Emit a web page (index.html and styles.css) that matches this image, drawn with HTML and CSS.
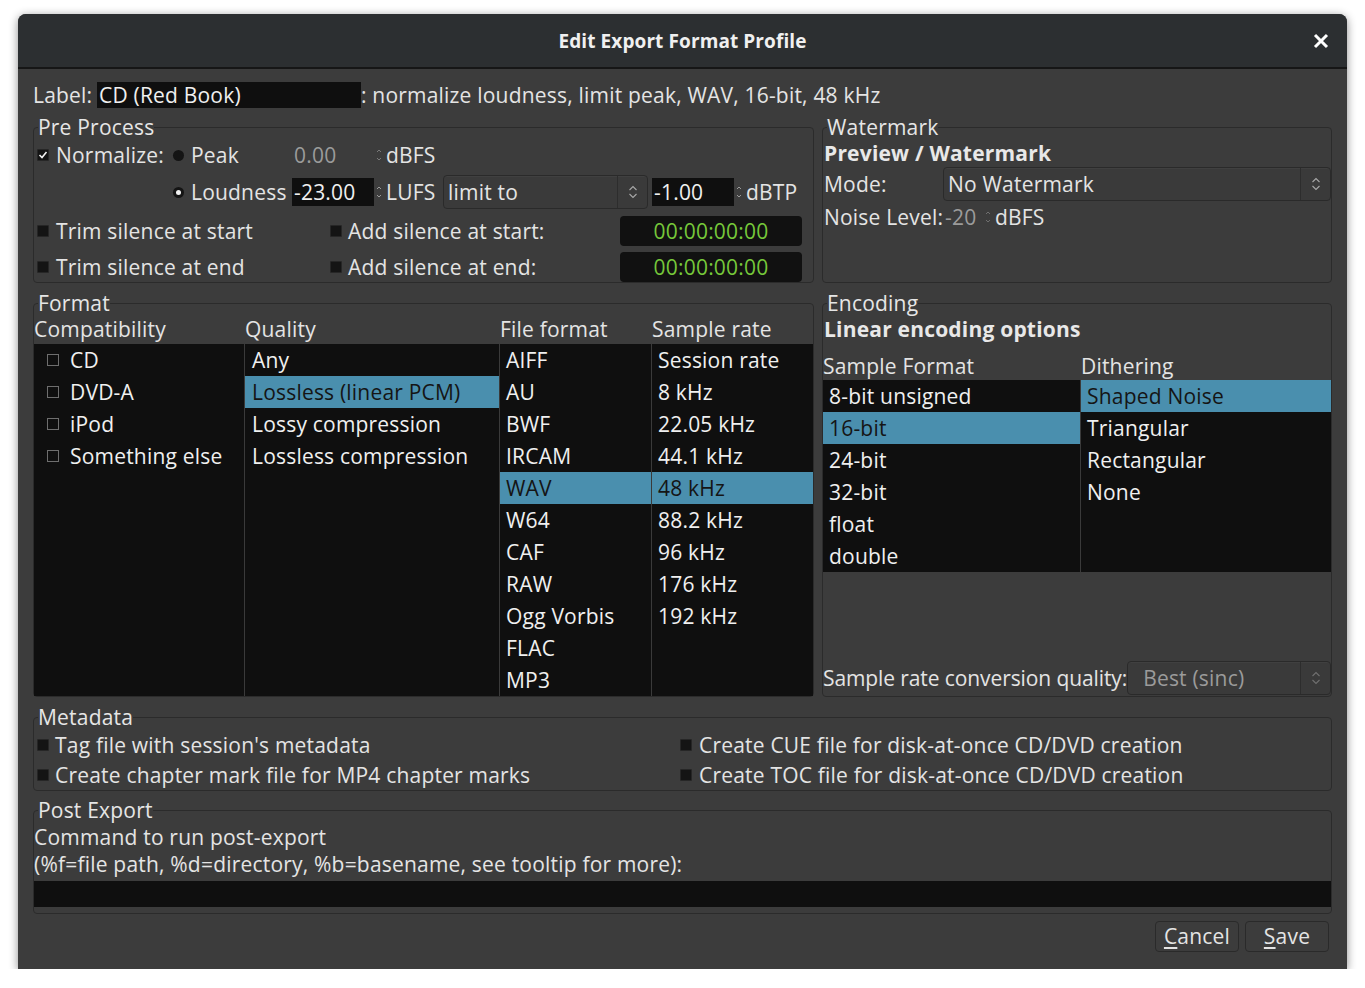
FILE: index.html
```html
<!DOCTYPE html>
<html>
<head>
<meta charset="utf-8">
<title>Edit Export Format Profile</title>
<link rel="stylesheet" href="styles.css">
</head>
<body>
<div class="window">
  <header class="titlebar">
    <span></span>
    <span class="title">Edit Export Format Profile</span>
    <svg class="close" width="16" height="16" viewBox="0 0 16 16"><path d="M2 2 L14 14 M14 2 L2 14" stroke="#ffffff" stroke-width="3" stroke-linecap="butt"/></svg>
  </header>
  <main class="content">
    <div class="label-row">
      <span class="label-txt">Label:</span>
      <span class="entry label-entry">CD (Red Book)</span>
      <span>: normalize loudness, limit peak, WAV, 16-bit, 48 kHz</span>
    </div>

    <div class="frame-row top-row">
      <fieldset class="frame preprocess">
        <legend>Pre Process</legend>
        <div class="pp-row r1">
          <div class="cell c-norm"><span class="check checked"><svg width="10" height="10" viewBox="0 0 10 10"><path d="M1.5 5 L4 7.5 L8.5 2" fill="none" stroke="#f2f2f2" stroke-width="1.6"/></svg></span><span>Normalize:</span></div>
          <div class="cell c-radio"><span class="radio"></span><span>Peak</span></div>
          <span class="spin dim">0.00</span>
          <span class="arrows"><svg width="6" height="16" viewBox="0 0 6 16"><path d="M1 5 L3 3 L5 5 M1 11 L3 13 L5 11" fill="none" stroke="#7a7a7a" stroke-width="1"/></svg></span>
          <span class="unit">dBFS</span>
        </div>
        <div class="pp-row r2">
          <div class="cell c-norm"></div>
          <div class="cell c-radio"><span class="radio on"></span><span>Loudness</span></div>
          <span class="spin entry">-23.00</span>
          <span class="arrows"><svg width="6" height="16" viewBox="0 0 6 16"><path d="M1 5 L3 3 L5 5 M1 11 L3 13 L5 11" fill="none" stroke="#9a9a9a" stroke-width="1"/></svg></span>
          <span class="unit lufs">LUFS</span>
          <div class="combo limit"><span class="combo-txt">limit to</span><span class="combo-btn"><svg width="10" height="16" viewBox="0 0 10 16"><path d="M1.5 6 L5 2.5 L8.5 6 M1.5 10 L5 13.5 L8.5 10" fill="none" stroke="#a8a8a8" stroke-width="1.1"/></svg></span></div>
          <span class="spin entry dbtp">-1.00</span>
          <span class="arrows"><svg width="6" height="16" viewBox="0 0 6 16"><path d="M1 5 L3 3 L5 5 M1 11 L3 13 L5 11" fill="none" stroke="#9a9a9a" stroke-width="1"/></svg></span>
          <span class="unit">dBTP</span>
        </div>
        <div class="pp-row r3">
          <div class="cell c-trim"><span class="check"></span><span>Trim silence at start</span></div>
          <div class="cell c-add"><span class="check"></span><span>Add silence at start:</span></div>
          <span class="clock">00:00:00:00</span>
        </div>
        <div class="pp-row r4">
          <div class="cell c-trim"><span class="check"></span><span>Trim silence at end</span></div>
          <div class="cell c-add"><span class="check"></span><span>Add silence at end:</span></div>
          <span class="clock">00:00:00:00</span>
        </div>
      </fieldset>

      <fieldset class="frame watermark">
        <legend>Watermark</legend>
        <div class="bold-line">Preview / Watermark</div>
        <div class="wm-row mode">
          <span class="wm-label">Mode:</span>
          <div class="combo wide"><span class="combo-txt">No Watermark</span><span class="combo-btn"><svg width="10" height="16" viewBox="0 0 10 16"><path d="M1.5 6 L5 2.5 L8.5 6 M1.5 10 L5 13.5 L8.5 10" fill="none" stroke="#a8a8a8" stroke-width="1.1"/></svg></span></div>
        </div>
        <div class="wm-row noise">
          <span class="wm-label">Noise Level:</span>
          <span class="spin dim small">-20</span>
          <span class="arrows"><svg width="6" height="16" viewBox="0 0 6 16"><path d="M1 5 L3 3 L5 5 M1 11 L3 13 L5 11" fill="none" stroke="#6f6f6f" stroke-width="1"/></svg></span>
          <span class="unit">dBFS</span>
        </div>
      </fieldset>
    </div>

    <div class="frame-row mid-row">
      <fieldset class="frame format">
        <legend>Format</legend>
        <div class="fmt-grid heads">
          <span>Compatibility</span><span>Quality</span><span>File format</span><span>Sample rate</span>
        </div>
        <div class="fmt-grid lists">
          <ul class="list compat">
            <li><span class="box"></span>CD</li>
            <li><span class="box"></span>DVD-A</li>
            <li><span class="box"></span>iPod</li>
            <li><span class="box"></span>Something else</li>
          </ul>
          <ul class="list quality">
            <li>Any</li>
            <li class="sel">Lossless (linear PCM)</li>
            <li>Lossy compression</li>
            <li>Lossless compression</li>
          </ul>
          <ul class="list ff">
            <li>AIFF</li><li>AU</li><li>BWF</li><li>IRCAM</li><li class="sel">WAV</li><li>W64</li><li>CAF</li><li>RAW</li><li>Ogg Vorbis</li><li>FLAC</li><li>MP3</li>
          </ul>
          <ul class="list ff">
            <li>Session rate</li><li>8 kHz</li><li>22.05 kHz</li><li>44.1 kHz</li><li class="sel">48 kHz</li><li>88.2 kHz</li><li>96 kHz</li><li>176 kHz</li><li>192 kHz</li>
          </ul>
        </div>
      </fieldset>

      <fieldset class="frame encoding">
        <legend>Encoding</legend>
        <div class="bold-line enc-bold">Linear encoding options</div>
        <div class="enc-grid heads enc-heads">
          <span>Sample Format</span><span>Dithering</span>
        </div>
        <div class="enc-grid lists">
          <ul class="list ff">
            <li>8-bit unsigned</li><li class="sel">16-bit</li><li>24-bit</li><li>32-bit</li><li>float</li><li>double</li>
          </ul>
          <ul class="list ff">
            <li class="sel">Shaped Noise</li><li>Triangular</li><li>Rectangular</li><li>None</li>
          </ul>
        </div>
        <div class="src-row">
          <span class="src-label">Sample rate conversion quality:</span>
          <div class="combo src"><span class="combo-txt dimtxt">Best (sinc)</span><span class="combo-btn"><svg width="10" height="16" viewBox="0 0 10 16"><path d="M1.5 6 L5 2.5 L8.5 6 M1.5 10 L5 13.5 L8.5 10" fill="none" stroke="#707070" stroke-width="1.1"/></svg></span></div>
        </div>
      </fieldset>
    </div>

    <fieldset class="frame metadata">
      <legend>Metadata</legend>
      <div class="meta-grid">
        <div class="meta-item"><span class="check"></span><span>Tag file with session's metadata</span></div>
        <div class="meta-item right"><span class="check"></span><span>Create CUE file for disk-at-once CD/DVD creation</span></div>
        <div class="meta-item"><span class="check"></span><span>Create chapter mark file for MP4 chapter marks</span></div>
        <div class="meta-item right"><span class="check"></span><span>Create TOC file for disk-at-once CD/DVD creation</span></div>
      </div>
    </fieldset>

    <fieldset class="frame post">
      <legend>Post Export</legend>
      <p class="post-text">Command to run post-export<br>(%f=file path, %d=directory, %b=basename, see tooltip for more):</p>
      <div class="entry post-entry"></div>
    </fieldset>

    <div class="buttons">
      <button class="btn"><u>C</u>ancel</button>
      <button class="btn"><u>S</u>ave</button>
    </div>
  </main>
</div>
</body>
</html>
```

FILE: styles.css
```css
* { box-sizing: border-box; }
html, body { margin: 0; padding: 0; }
body {
  background: #ffffff;
  font-family: "Open Sans", "DejaVu Sans", sans-serif;
  font-size: 21px;
  letter-spacing: 0.2px;
  color: #e4e4e4;
}
.window {
  margin: 14px 0 0 18px;
  width: 1329px;
  height: 955px;
  background: #3c3c3c;
  border-radius: 8px 8px 0 0;
  box-shadow: 0 2px 10px rgba(0,0,0,0.45);
  display: flex;
  flex-direction: column;
  overflow: hidden;
}
.titlebar {
  height: 55px;
  flex: 0 0 55px;
  background: #2c2f31;
  border-bottom: 2px solid #161616;
  display: grid;
  grid-template-columns: 1fr auto 1fr;
  align-items: center;
  padding: 0 18px;
}
.title {
  font-weight: 700;
  font-size: 19px;
  letter-spacing: 0.1px;
  color: #f0f0f0;
}
.close { justify-self: end; }

.content {
  padding: 0 15px;
  display: flex;
  flex-direction: column;
}
.label-row {
  margin-top: 12px;
  height: 28px;
  display: flex;
  align-items: center;
  white-space: nowrap;
}
.label-txt { width: 64px; }
.entry {
  background: #0f0f0f;
  color: #f0f0f0;
}
.label-entry {
  width: 264px;
  height: 26px;
  line-height: 26px;
  padding-left: 2px;
}

.frame-row {
  display: flex;
  gap: 8px;
  margin-top: 6px;
}
.mid-row { margin-top: 8px; }
.frame {
  margin: 0;
  padding: 0;
  border: 1px solid #2b2b2b;
  border-radius: 4px;
  min-width: 0;
}
.frame legend {
  padding: 0;
  margin-left: 4px;
  line-height: 24px;
  height: 24px;
  color: #e6e6e6;
}
.preprocess, .format { flex: 0 0 781px; }
.watermark, .encoding { flex: 1 1 auto; }

.cell { display: flex; align-items: center; height: 100%; }
.check {
  width: 12px; height: 12px;
  background: #141414;
  border: 1px solid #262626;
  border-radius: 1px;
  display: inline-flex;
  align-items: center;
  justify-content: center;
  flex: 0 0 12px;
}
.radio {
  width: 11px; height: 11px;
  border-radius: 50%;
  background: #141414;
  flex: 0 0 11px;
  position: relative;
}
.radio.on::after {
  content: "";
  position: absolute;
  left: 3px; top: 3px;
  width: 5px; height: 5px;
  border-radius: 50%;
  background: #f0f0f0;
}
.pp-row {
  display: flex;
  align-items: center;
  white-space: nowrap;
}
.pp-row.r1 { height: 32px; }
.pp-row.r2 { height: 42px; }
.pp-row.r3 { height: 30px; margin-top: 3px; }
.pp-row.r4 { height: 30px; margin-top: 6px; }
.c-norm { width: 139px; padding-left: 3px; gap: 7px; }
.c-radio { width: 119px; gap: 7px; }
.spin {
  width: 82px;
  height: 28px;
  line-height: 28px;
  padding-left: 2px;
}
.dim { color: #9b9b9b; }
.spin.small { width: 40px; }
.arrows { width: 12px; display: flex; align-items: center; padding-left: 2px; }
.lufs { width: 57px; }
.combo {
  height: 34px;
  background: #3a3a3a;
  border: 1px solid #2a2a2a;
  border-radius: 4px;
  display: flex;
  align-items: center;
  box-shadow: inset 0 1px 0 rgba(255,255,255,0.03);
}
.combo-txt { flex: 1 1 auto; padding-left: 4px; white-space: nowrap; }
.combo-btn {
  width: 30px;
  height: 100%;
  border-left: 1px solid #2d2d2d;
  display: flex;
  align-items: center;
  justify-content: center;
}
.combo.limit { width: 205px; margin-right: 4px; }
.c-trim { width: 296px; padding-left: 3px; gap: 7px; }
.c-add { width: 290px; gap: 6px; }
.clock {
  width: 182px;
  height: 30px;
  line-height: 30px;
  background: #111111;
  border-radius: 4px;
  color: #76c83a;
  text-align: center;
}

.bold-line {
  font-weight: 700;
  height: 28px;
  line-height: 28px;
  padding-left: 1px;
  color: #e8e8e8;
}
.wm-row {
  display: flex;
  align-items: center;
  white-space: nowrap;
}
.wm-row.mode { height: 34px; }
.wm-row.noise { height: 32px; }
.wm-label { width: 120px; padding-left: 1px; }
.combo.wide { flex: 1 1 auto; }

.fmt-grid {
  display: grid;
  grid-template-columns: 210px 254px 151px 161px;
  column-gap: 1px;
}
.heads { height: 29px; line-height: 29px; white-space: nowrap; }
.lists { background: #3a3a3a; }
.format .lists { height: 352px; }
.list {
  list-style: none;
  margin: 0;
  padding: 0;
  background: #0f0f0f;
  color: #f0f0f0;
}
.list li {
  height: 32px;
  line-height: 32px;
  white-space: nowrap;
}
.list li.sel {
  background: #4a8fae;
  color: #151515;
}
.compat li { display: flex; align-items: center; padding-left: 13px; }
.box {
  width: 12px; height: 12px;
  border: 1px solid #6e6e6e;
  margin-right: 11px;
  flex: 0 0 12px;
}
.quality li { padding-left: 7px; }
.ff li { padding-left: 6px; }

.encoding { display: flex; flex-direction: column; }
.enc-grid {
  display: grid;
  grid-template-columns: 257px 250px;
  column-gap: 1px;
}
.enc-heads { height: 37px; line-height: 28px; padding-top: 9px; }
.encoding .lists { height: 192px; }
.src-row {
  margin-top: auto;
  display: flex;
  align-items: center;
  justify-content: space-between;
  white-space: nowrap;
  height: 34px;
  margin-bottom: 1px;
}
.src-label { letter-spacing: -0.1px; }
.combo.src { flex: 0 0 204px; }
.dimtxt { color: #9b9b9b; padding-left: 15px; }

.metadata { margin-top: 8px; }
.meta-grid {
  display: grid;
  grid-template-columns: 646px 1fr;
  padding-top: 1px;
}
.meta-item {
  height: 30px;
  display: flex;
  align-items: center;
  gap: 6px;
  padding-left: 3px;
  white-space: nowrap;
}
.meta-item.right { padding-left: 0; gap: 7px; }

.post { margin-top: 7px; padding-bottom: 6px; }
.post-text {
  margin: 0;
  padding-top: 2px;
  line-height: 27px;
  white-space: nowrap;
}
.post-entry { margin-top: 3px; height: 26px; }

.buttons {
  display: flex;
  justify-content: flex-end;
  gap: 6px;
  margin-top: 7px;
  padding-right: 3px;
}
.btn {
  width: 84px;
  height: 31px;
  background: #3c3c3c;
  border: 1px solid #2a2a2a;
  border-radius: 4px;
  color: #e4e4e4;
  font-family: inherit;
  font-size: 21px;
  letter-spacing: 0.2px;
  padding: 0;
  line-height: 29px;
}
.btn u { text-underline-offset: 3px; }
```
